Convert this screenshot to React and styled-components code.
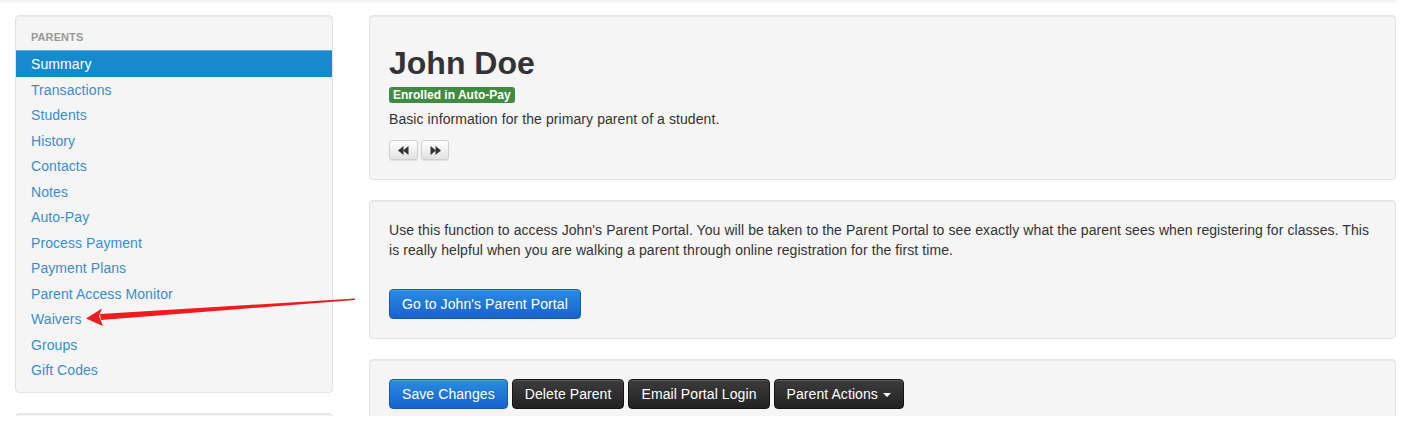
import styled, { createGlobalStyle } from "styled-components";

const GlobalStyle = createGlobalStyle`
  html, body {
    margin: 0;
    padding: 0;
    background: #fff;
  }
  body {
    font-family: "Liberation Sans", Arial, sans-serif;
    font-size: 14px;
    line-height: 20px;
    letter-spacing: 0.08px;
    color: #333;
  }
`;

const Viewport = styled.div`
  position: relative;
  height: 416px;
  overflow: hidden;
  width: 1396px;
`;

const TopShade = styled.div`
  height: 3px;
  background: linear-gradient(#f0f0f0, #fbfbfb);
`;

const Layout = styled.div`
  display: flex;
  gap: 36px;
  padding: 12px 0 0 15px;
`;

const Sidebar = styled.aside`
  width: 318px;
  flex: none;
  display: flex;
  flex-direction: column;
  gap: 20px;
`;

const Well = styled.div`
  background: #f5f5f5;
  border: 1px solid #e3e3e3;
  border-radius: 4px;
  box-shadow: inset 0 1px 1px rgba(0, 0, 0, 0.05);
  padding: ${(p) => p.$pad || "19px"};
`;

const NavHeader = styled.div`
  padding: 11px 15px 4px;
  font-size: 11px;
  font-weight: bold;
  text-transform: uppercase;
  color: #999;
  line-height: 20px;
`;

const NavItem = styled.a`
  display: block;
  padding: 3px 15px 2.5px;
  line-height: 20px;
  color: ${(p) => (p.$active ? "#fff" : "#3a8dcf")};
  background: ${(p) => (p.$active ? "#168acd" : "transparent")};
  border-top: ${(p) => (p.$active ? "1px solid #5aaee0" : "0")};
  margin-top: ${(p) => (p.$active ? "-1px" : "0")};
  text-decoration: none;
  font-size: 14px;
`;

const Main = styled.main`
  width: 1027px;
  flex: none;
  display: flex;
  flex-direction: column;
  gap: 20px;
`;

const Title = styled.h1`
  margin: 10px 0 0;
  font-size: 32px;
  line-height: 36px;
  font-weight: bold;
  letter-spacing: 0;
  color: #333;
`;

const Badge = styled.span`
  align-self: flex-start;
  margin-top: 6px;
  background: #3f8b41;
  color: #fff;
  font-size: 12px;
  font-weight: bold;
  line-height: 12px;
  letter-spacing: 0;
  padding: 2px 4px;
  border-radius: 3px;
`;

const Text = styled.p`
  margin: ${(p) => p.$margin || "0"};
  font-size: 14px;
  line-height: 20px;
`;

const Stack = styled.div`
  display: flex;
  flex-direction: column;
`;

const Pager = styled.div`
  display: flex;
  gap: 3px;
  margin-top: 11px;
`;

const PagerButton = styled.button`
  width: ${(p) => p.$w}px;
  height: 20px;
  padding: 0;
  display: flex;
  align-items: center;
  justify-content: center;
  background: linear-gradient(#ffffff, #e2e2e2);
  border: 1px solid #cfcfcf;
  border-radius: 3px;
  box-shadow: 0 1px 1px rgba(0, 0, 0, 0.08);
`;

const Button = styled.button`
  display: inline-flex;
  align-items: center;
  gap: 5px;
  height: 30px;
  padding: 0 12px;
  font-family: inherit;
  font-size: 14px;
  letter-spacing: 0.08px;
  color: #fff;
  border-radius: 4px;
  border: 1px solid ${(p) => (p.$dark ? "#141414" : "#1559b8")};
  background: ${(p) =>
    p.$dark
      ? "linear-gradient(#3c3c3c, #222)"
      : "linear-gradient(#2a8ce0, #1763cb)"};
  box-shadow: inset 0 1px 0 rgba(255, 255, 255, 0.15);
`;

const ButtonRow = styled.div`
  display: flex;
  gap: 4px;
`;

const Caret = styled.span`
  width: 0;
  height: 0;
  border-left: 4px solid transparent;
  border-right: 4px solid transparent;
  border-top: 4px solid #fff;
  margin-top: 2px;
`;

const Annotation = styled.svg`
  position: absolute;
  left: 0;
  top: 0;
  pointer-events: none;
`;

const Backward = () => (
  <svg width="11" height="9" viewBox="0 0 11 9">
    <polygon points="0,4.5 5.5,0 5.5,9" fill="#333" />
    <polygon points="5,4.5 10.5,0 10.5,9" fill="#333" />
  </svg>
);

const Forward = () => (
  <svg width="11" height="9" viewBox="0 0 11 9">
    <polygon points="11,4.5 5.5,0 5.5,9" fill="#333" />
    <polygon points="6,4.5 0.5,0 0.5,9" fill="#333" />
  </svg>
);

const links = [
  "Summary",
  "Transactions",
  "Students",
  "History",
  "Contacts",
  "Notes",
  "Auto-Pay",
  "Process Payment",
  "Payment Plans",
  "Parent Access Monitor",
  "Waivers",
  "Groups",
  "Gift Codes",
];

export default function App() {
  return (
    <>
      <GlobalStyle />
      <Viewport>
        <TopShade />
        <Layout>
          <Sidebar>
            <Well $pad="0 0 9px">
              <NavHeader>Parents</NavHeader>
              {links.map((l, i) => (
                <NavItem key={l} $active={i === 0}>
                  {l}
                </NavItem>
              ))}
            </Well>
            <Well $pad="0" style={{ height: 40 }} />
          </Sidebar>
          <Main>
            <Well>
              <Stack>
                <Title>John Doe</Title>
                <Badge>Enrolled in Auto-Pay</Badge>
                <Text $margin="6px 0 0">
                  Basic information for the primary parent of a student.
                </Text>
                <Pager>
                  <PagerButton $w={29}>
                    <Backward />
                  </PagerButton>
                  <PagerButton $w={28}>
                    <Forward />
                  </PagerButton>
                </Pager>
              </Stack>
            </Well>
            <Well>
              <Stack>
                <Text $margin="0 0 29px">
                  Use this function to access John's Parent Portal. You will be
                  taken to the Parent Portal to see exactly what the parent sees
                  when registering for classes. This is really helpful when you
                  are walking a parent through online registration for the first
                  time.
                </Text>
                <div>
                  <Button>Go to John's Parent Portal</Button>
                </div>
              </Stack>
            </Well>
            <Well>
              <ButtonRow>
                <Button>Save Changes</Button>
                <Button $dark>Delete Parent</Button>
                <Button $dark>Email Portal Login</Button>
                <Button $dark>
                  Parent Actions <Caret />
                </Button>
              </ButtonRow>
            </Well>
          </Main>
        </Layout>
        <Annotation width="400" height="400" viewBox="0 0 400 400">
          <polygon points="355,298.5 355,300 101,320 100,314" fill="#ee1c1c" />
          <polygon points="86,318.5 102,308.5 99,316 103,326" fill="#ee1c1c" />
        </Annotation>
      </Viewport>
    </>
  );
}
